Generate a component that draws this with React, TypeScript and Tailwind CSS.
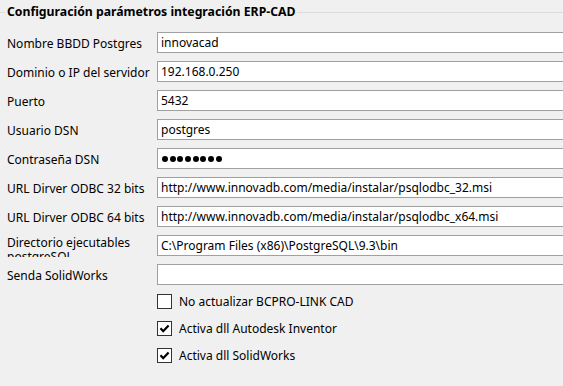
import React from 'react';

const fields: { label: string; value: string; kind?: 'password' | 'wrap' }[] = [
  { label: 'Nombre BBDD Postgres', value: 'innovacad' },
  { label: 'Dominio o IP del servidor', value: '192.168.0.250' },
  { label: 'Puerto', value: '5432' },
  { label: 'Usuario DSN', value: 'postgres' },
  { label: 'Contraseña DSN', value: '', kind: 'password' },
  { label: 'URL Dirver ODBC 32 bits', value: 'http://www.innovadb.com/media/instalar/psqlodbc_32.msi' },
  { label: 'URL Dirver ODBC 64 bits', value: 'http://www.innovadb.com/media/instalar/psqlodbc_x64.msi' },
  { label: 'Directorio ejecutables postgreSQL', value: 'C:\\Program Files (x86)\\PostgreSQL\\9.3\\bin', kind: 'wrap' },
  { label: 'Senda SolidWorks', value: '' },
];

const checks = [
  { label: 'No actualizar BCPRO-LINK CAD', checked: false },
  { label: 'Activa dll Autodesk Inventor', checked: true },
  { label: 'Activa dll SolidWorks', checked: true },
];

function CheckBox({ checked }: { checked: boolean }) {
  return (
    <div className="w-[15px] h-[15px] border border-[#333333] bg-white flex items-center justify-center">
      {checked && (
        <svg width="11" height="11" viewBox="0 0 11 11">
          <path d="M1.5 5.3 L4.2 8.2 L9.6 2.4" fill="none" stroke="#000" strokeWidth="2.2" />
        </svg>
      )}
    </div>
  );
}

export default function App() {
  return (
    <div className="w-[563px] h-[386px] overflow-hidden bg-[#f0f0f0] text-black text-[12px] font-['Noto_Sans',Tahoma,sans-serif]">
      {/* Group box header */}
      <div className="flex items-center h-[24px] w-[563px]">
        <div className="w-[5px] h-px bg-[#dcdcdc]" />
        <span className="px-[2px] font-bold text-[12.25px] text-black whitespace-nowrap">
          Configuración parámetros integración ERP-CAD
        </span>
        <div className="flex-1 h-px bg-[#dcdcdc]" />
      </div>

      {/* Fields */}
      <div className="w-[640px] pl-[7px] pt-[8px] flex flex-col gap-[8px]">
        {fields.map((f) => (
          <div key={f.label} className="flex items-center h-[21px]">
            {f.kind === 'wrap' ? (
              <div className="w-[150px] h-[22px] overflow-hidden self-start">
                <div className="leading-[14px] w-[140px] mt-px">{f.label}</div>
              </div>
            ) : (
              <div className="w-[150px] whitespace-nowrap pt-[2px]">{f.label}</div>
            )}
            <div className="flex-1 h-[21px] border border-[#a0a0a0] bg-white flex items-center pl-[3px] whitespace-nowrap">
              {f.kind === 'password' ? (
                <div className="flex gap-[1.7px] pl-px">
                  {Array.from({ length: 8 }).map((_, i) => (
                    <span key={i} className="w-[6px] h-[6px] rounded-full bg-black" />
                  ))}
                </div>
              ) : (
                f.value
              )}
            </div>
          </div>
        ))}
      </div>

      {/* Checkboxes */}
      <div className="pl-[157px] pt-[9px] flex flex-col gap-[12px]">
        {checks.map((c) => (
          <div key={c.label} className="flex items-center h-[15px] gap-[7px]">
            <CheckBox checked={c.checked} />
            <span className="whitespace-nowrap">{c.label}</span>
          </div>
        ))}
      </div>
    </div>
  );
}
